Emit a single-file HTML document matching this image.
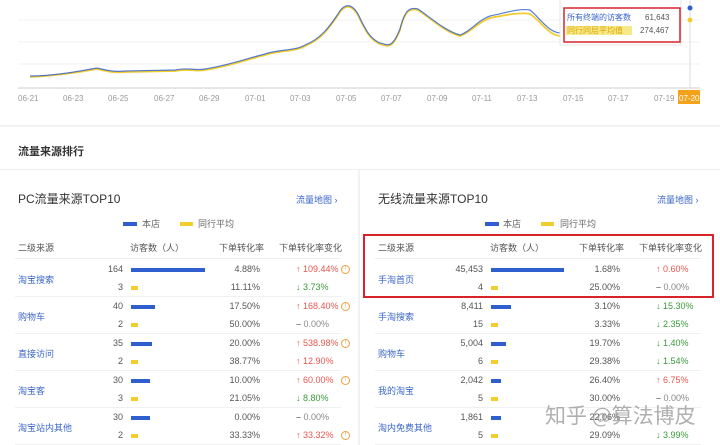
<!DOCTYPE html>
<html><head><meta charset="utf-8"><style>
*{margin:0;padding:0;box-sizing:border-box}
body{width:720px;height:445px;overflow:hidden;background:#fff;font-family:"Liberation Sans","Noto Sans CJK SC",sans-serif;color:#333;position:relative;font-size:9px}
.a{position:absolute;white-space:nowrap}
.lbl{color:#999;font-size:8px}
.bl{background:#2f5fce;height:4px;position:absolute}
.yl{background:#f2cd2e;height:4px;position:absolute}
.lnk{color:#3a65c8}
.up{color:#e8564e}.dn{color:#3a9a3a}.eq{color:#888}
.ic{position:absolute;width:9px;height:9px;border:1px solid #f0a040;border-radius:50%;color:#f0a040;font-size:6px;text-align:center;line-height:7px}
</style></head><body>
<svg class="a" style="left:0;top:0" width="720" height="125">
<g stroke="#f0f0f0"><line x1="18" y1="20" x2="700" y2="20"/><line x1="18" y1="42" x2="700" y2="42"/><line x1="18" y1="64" x2="700" y2="64"/></g>
<line x1="18" y1="88" x2="700" y2="88" stroke="#ccc"/>
<line x1="690" y1="0" x2="690" y2="88" stroke="#ddd"/>
<path d="M30,77 C50,76 70,74 97,69 C110,72 115,73 125,72 L175,71 C190,68 195,72 205,70 C230,66 245,60 265,55 C280,50 295,52 305,46 C320,40 328,30 338,15 C345,3 352,5 358,15 C365,30 370,40 380,44 C388,46 392,50 400,30 C405,10 410,8 418,10 C430,18 445,32 460,36 C470,33 478,22 490,18 C505,15 520,12 530,14 C540,20 548,35 560,36" fill="none" stroke="#f2cd2e" stroke-width="1.8"/>
<path d="M30,76 C50,76 70,73 97,68 C110,71 115,72 125,71 L175,70 C190,67 195,71 205,69 C230,65 245,59 265,54 C280,49 295,51 305,45 C320,39 328,29 338,14 C345,2 352,4 358,14 C365,29 370,39 380,43 C388,45 392,49 400,29 C405,9 410,7 418,9 C430,17 445,31 460,35 C470,32 478,20 490,16 C505,13 520,8 530,10 C540,18 548,32 560,33" fill="none" stroke="#2f5fce" stroke-width="1.2" opacity=".8"/>
<circle cx="690" cy="8" r="2.5" fill="#2f5fce"/><circle cx="690" cy="20" r="2.5" fill="#f2cd2e"/>
<rect x="560" y="-2" width="121" height="47" fill="#fff" stroke="#e4e4e4"/>
<rect x="564" y="8" width="116" height="34" fill="none" stroke="#d8232a" stroke-width="1.5"/>
<text x="567" y="20" font-size="8" fill="#3a65c8">所有终端的访客数</text><text x="645" y="20" font-size="8" fill="#555">61,643</text>
<rect x="566" y="26" width="66" height="9" fill="#f7e88a"/>
<text x="567" y="33" font-size="8" fill="#d9a800">同行同层平均值</text><text x="640" y="33" font-size="8" fill="#555">274,467</text>
<rect x="678" y="90" width="22" height="14" fill="#f3a21a"/>
<g font-size="8" fill="#999"><text x="18" y="101">06-21</text><text x="63" y="101">06-23</text><text x="108" y="101">06-25</text><text x="154" y="101">06-27</text><text x="199" y="101">06-29</text><text x="245" y="101">07-01</text><text x="290" y="101">07-03</text><text x="336" y="101">07-05</text><text x="381" y="101">07-07</text><text x="427" y="101">07-09</text><text x="472" y="101">07-11</text><text x="517" y="101">07-13</text><text x="563" y="101">07-15</text><text x="608" y="101">07-17</text><text x="654" y="101">07-19</text><text x="679" y="101" fill="#fff">07-20</text></g>
</svg>
<div class="a" style="left:0;top:125;width:720px;height:2px;background:#f2f2f2;top:125px"></div>
<div class="a" style="left:18px;top:143px;font-size:11px;font-weight:bold;color:#333">流量来源排行</div>
<div class="a" style="left:0;top:169px;width:720px;height:1px;background:#eee"></div>
<div class="a" style="left:358px;top:170px;width:2px;height:275px;background:#f2f2f2"></div>

<div class="a" style="left:18px;top:190px;font-size:12px;color:#333">PC流量来源TOP10</div>
<div class="a lnk" style="left:296px;top:193px;font-size:9px">流量地图 ›</div>
<div class="a" style="left:378px;top:190px;font-size:12px;color:#333">无线流量来源TOP10</div>
<div class="a lnk" style="left:657px;top:193px;font-size:9px">流量地图 ›</div>

<div class="bl" style="left:123px;top:222px;width:14px"></div><div class="a" style="left:142px;top:217px;color:#666">本店</div>
<div class="yl" style="left:180px;top:222px;width:13px"></div><div class="a" style="left:198px;top:217px;color:#666">同行平均</div>
<div class="bl" style="left:485px;top:222px;width:14px"></div><div class="a" style="left:503px;top:217px;color:#666">本店</div>
<div class="yl" style="left:541px;top:222px;width:13px"></div><div class="a" style="left:560px;top:217px;color:#666">同行平均</div>

<div id="L"></div>
<div class="a" style="left:363px;top:234px;width:351px;height:64px;border:2px solid #d8232a"></div>
<div class="a" style="left:545px;top:400px;font-size:21px;color:rgba(150,150,150,.75);font-family:'Noto Sans CJK SC',sans-serif">知乎 @算法博皮</div>
<script>
function panel(x0,rows){
 let h='';
 h+=`<div class="a" style="left:${x0+18}px;top:241px;color:#555">二级来源</div><div class="a" style="left:${x0+130}px;top:241px;color:#555">访客数（人）</div><div class="a" style="left:${x0+219}px;top:241px;color:#555">下单转化率</div><div class="a" style="left:${x0+279}px;top:241px;color:#555">下单转化率变化</div><div class="a" style="left:${x0+15}px;top:258px;width:326px;height:1px;background:#eee"></div>`;
 rows.forEach((r,i)=>{const y=264+i*37;
  h+=`<div class="a lnk" style="left:${x0+18}px;top:${y+9}px">${r[0]}</div>`;
  [[r[1],r[2],r[3],r[4],'bl',0],[r[5],r[6],r[7],r[8],'yl',18]].forEach(s=>{const yy=y+s[5];
   h+=`<div class="a" style="left:${x0+60}px;width:63px;text-align:right;top:${yy}px;color:#555">${s[0]}</div><div class="${s[4]}" style="left:${x0+131}px;top:${yy+4}px;width:${s[1]}px"></div><div class="a" style="left:${x0+200}px;width:60px;text-align:right;top:${yy}px;color:#555">${s[2]}</div>`;
   const c=s[3][0],cl=c=='u'?'up':c=='d'?'dn':'eq',g=c=='u'?'↑':c=='d'?'↓':'–';
   h+=`<div class="a ${cl}" style="left:${x0+296}px;top:${yy}px"><b>${g}</b> ${s[3].slice(1)}</div>`;
   if(s[3].includes('!'))h+=''});
  if(r[9]) h+=`<div class="ic" style="left:${x0+341}px;top:${y+1+(r[9]==2?18:0)}px">!</div>`;
  h+=`<div class="a" style="left:${x0+15}px;top:${y+32}px;width:326px;height:1px;background:#f0f0f0"></div>`;
 });
 return h;}
document.getElementById('L').innerHTML=panel(0,[
['淘宝搜索',164,74,'4.88%','u109.44%',3,7,'11.11%','d3.73%',1],
['购物车',40,24,'17.50%','u168.40%',2,7,'50.00%','e0.00%',1],
['直接访问',35,21,'20.00%','u538.98%',2,7,'38.77%','u12.90%',1],
['淘宝客',30,19,'10.00%','u60.00%',3,7,'21.05%','d8.80%',1],
['淘宝站内其他',30,19,'0.00%','e0.00%',2,7,'33.33%','u33.32%',2]])+panel(360,[
['手淘首页','45,453',73,'1.68%','u0.60%',4,7,'25.00%','e0.00%',0],
['手淘搜索','8,411',20,'3.10%','d15.30%',15,7,'3.33%','d2.35%',0],
['购物车','5,004',15,'19.70%','d1.40%',6,7,'29.38%','d1.54%',0],
['我的淘宝','2,042',10,'26.40%','u6.75%',5,7,'30.00%','e0.00%',0],
['淘内免费其他','1,861',10,'22.06%','d','5',7,'29.09%','d3.99%',0]]);
</script>
</body></html>
